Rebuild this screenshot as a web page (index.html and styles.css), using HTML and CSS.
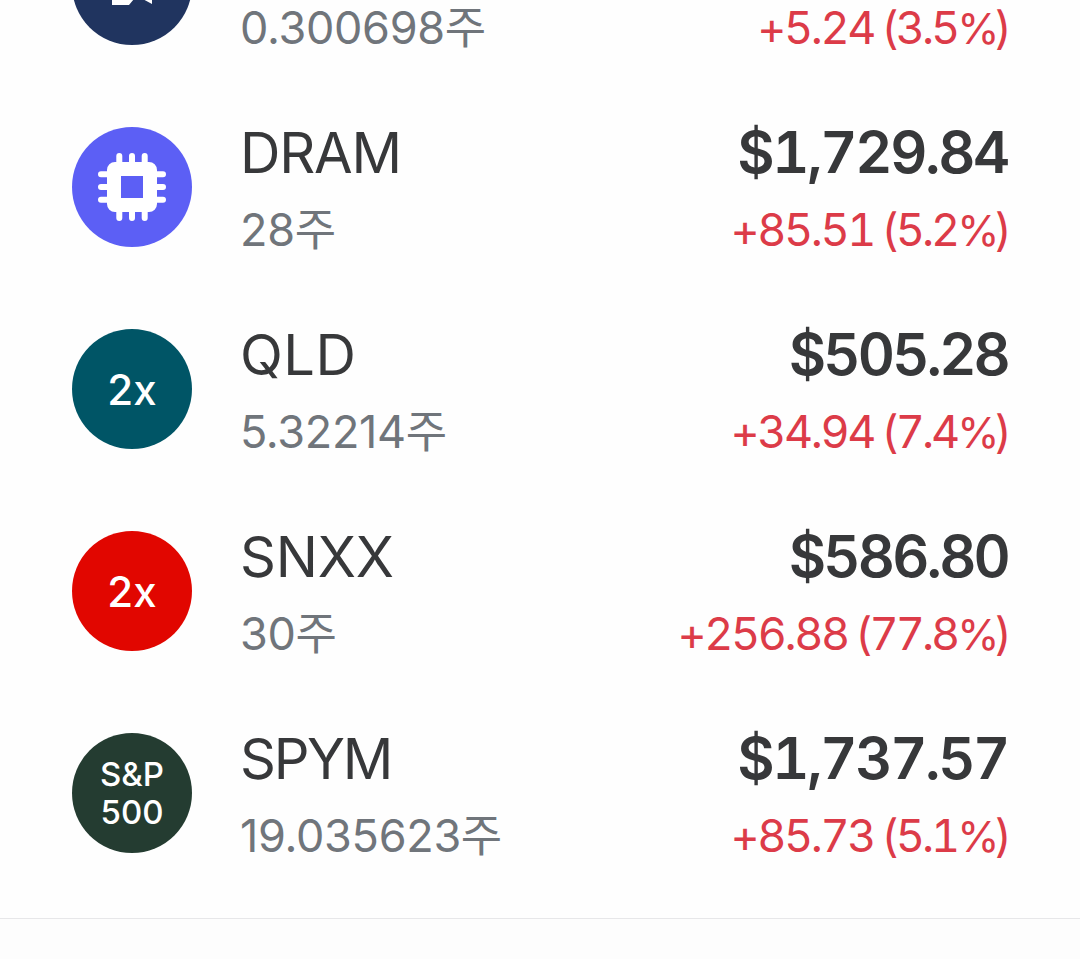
FILE: index.html
```
<!DOCTYPE html>
<html lang="ko"><head><meta charset="utf-8"><title>보유 주식</title><link rel="stylesheet" href="styles.css"></head>
<body>
<main class="holdings">
<section class="row"><div class="badge navy"><svg viewBox="0 0 120 120"><path d="M40 66H70L62 74L57 80H40ZM68 66H80V79L67 72Z" fill="#fff"/></svg></div><div class="info"><div class="name">&nbsp;</div><div class="shares">0.300698주</div></div><div class="value"><div class="price">&nbsp;</div><div class="gain">+5.24 <span class="rate">(3.5<span class="percent">%</span>)</span></div></div></section>
<section class="row"><div class="badge violet"><svg viewBox="0 0 120 120"><g fill="none" stroke="#fff"><rect x="42" y="42" width="36" height="36" rx="1" stroke-width="14"/><path d="M47.3 29V38M47.3 82V91M60 29V38M60 82V91M72.7 29V38M72.7 82V91M29 47.3H38M82 47.3H91M29 60H38M82 60H91M29 72.7H38M82 72.7H91" stroke-width="6" stroke-linecap="round"/></g></svg></div><div class="info"><div class="name">DRAM</div><div class="shares">28주</div></div><div class="value"><div class="price long">$1,729.84</div><div class="gain">+85.51 <span class="rate">(5.2<span class="percent">%</span>)</span></div></div></section>
<section class="row"><div class="badge teal">2x</div><div class="info"><div class="name wide">QLD</div><div class="shares">5.32214주</div></div><div class="value"><div class="price">$505.28</div><div class="gain">+34.94 <span class="rate">(7.4<span class="percent">%</span>)</span></div></div></section>
<section class="row"><div class="badge red">2x</div><div class="info"><div class="name snxx">SNXX</div><div class="shares">30주</div></div><div class="value"><div class="price">$586.80</div><div class="gain">+256.88 <span class="rate">(77.8<span class="percent">%</span>)</span></div></div></section>
<section class="row"><div class="badge green">S&amp;P<br>500</div><div class="info"><div class="name tight">SPYM</div><div class="shares">19.035623주</div></div><div class="value"><div class="price long">$1,737.57</div><div class="gain">+85.73 <span class="rate">(5.1<span class="percent">%</span>)</span></div></div></section>
</main><footer class="footer"></footer>
</body></html>
```
FILE: styles.css
```
*{box-sizing:border-box}
body{margin:0;height:959px;overflow:hidden;background:#fefefe;font-family:Inter,"Noto Sans CJK KR",sans-serif}
.holdings{height:918px;padding:0 72px 24px;display:flex;flex-direction:column;justify-content:flex-end;overflow:hidden}
.row{height:202px;flex:none;display:flex;align-items:center}
.badge{width:120px;height:120px;border-radius:50%;display:flex;align-items:center;justify-content:center;text-align:center;color:#fff;font-size:42px;font-weight:500;flex:none}
.badge svg{width:120px;height:120px}
.navy{background:#20345f}.violet{background:#5c5ff5}.teal{background:#005566}.red{background:#e10600}.green{background:#243c31;font-size:33px;line-height:38px}
.info{margin-left:48px;flex:1;padding-top:8px}
.value{text-align:right;white-space:nowrap;padding-top:8px}
.name,.price{height:77px;line-height:77px;font-size:56px;color:#37383a;letter-spacing:-1.2px}
.name{line-height:79px}
.name.wide{letter-spacing:.5px}
.name.snxx{letter-spacing:-.2px}
.name.tight{letter-spacing:-2.3px}
.price{font-size:57.5px;font-weight:600;font-feature-settings:"tnum";letter-spacing:-2.8px;margin-right:0}
.price.long{letter-spacing:-2.3px}
.shares,.gain{height:77px;line-height:77px;font-size:45px;color:#70757b;letter-spacing:-.3px}
.gain{color:#dc3b48;font-feature-settings:"tnum";letter-spacing:-2.4px;word-spacing:-2.5px;margin-right:-1px}
.rate{letter-spacing:-3px}
.percent{font-size:43px;letter-spacing:-5px}
.footer{height:41px;border-top:1px solid #e7e7e9;background:#fdfdfd}
```
